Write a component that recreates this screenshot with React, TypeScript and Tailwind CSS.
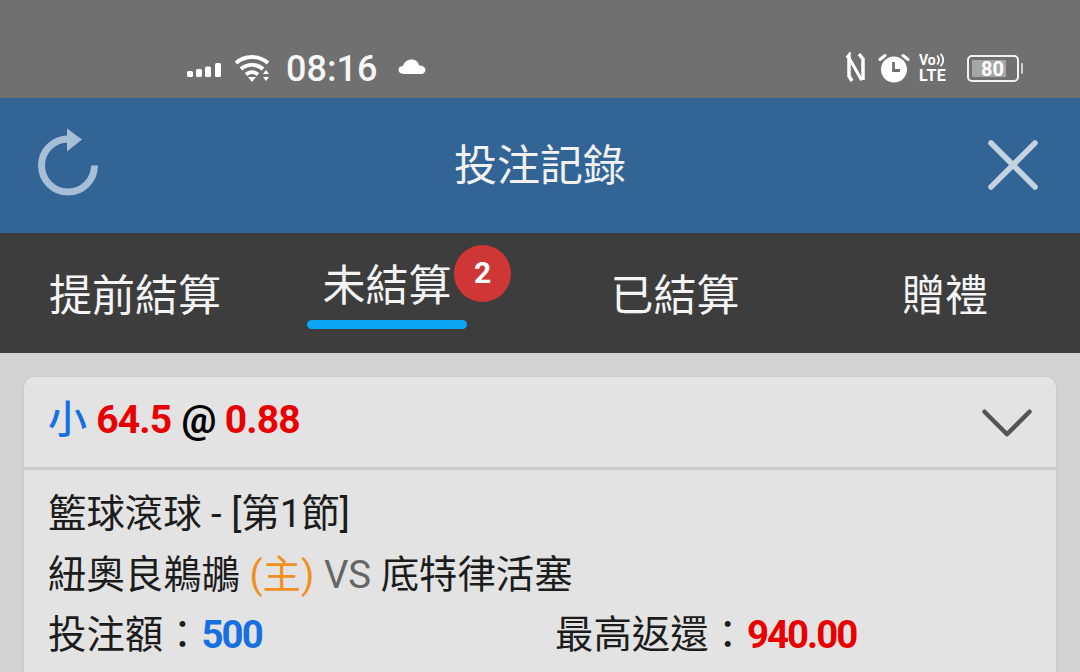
import { X, ChevronDown } from 'lucide-react';

const cjk = "font-['Roboto','Noto_Sans_CJK_TC',sans-serif]";

const App = () => {
  return (
    <div className={`w-[1080px] h-[672px] overflow-hidden bg-[#d2d2d2] flex flex-col ${cjk}`}>
      {/* status bar */}
      <div className="h-[98px] bg-[#707070] flex items-end justify-between pb-[9px] pl-[186px] pr-[61px] text-white">
        <div className="flex items-center h-[40px]">
          <svg width="38" height="16" viewBox="0 0 38 16" fill="white">
            <rect x="1" y="10" width="6" height="6" rx="1.5" />
            <rect x="10" y="8" width="6" height="8" rx="1.5" />
            <rect x="19" y="5.5" width="6" height="10.5" rx="1.5" />
            <rect x="29" y="2" width="6" height="14" rx="1.5" />
          </svg>
          <svg className="ml-[10px]" width="38" height="30" viewBox="0 0 38 30" fill="none" stroke="white" strokeWidth="3.800">
            <path d="M2 9C11 1 25 1 34 9" />
            <path d="M7 15C13 9.500 23 9.500 29 15" />
            <path d="M12 20.500C15.500 17.500 20.500 17.500 24 20.500" />
            <path d="M14 23L18 28L22 23Z" fill="white" stroke="none" />
            <path d="M29 20L32 16L35 20Z M29 23L32 27L35 23Z" fill="white" stroke="none" />
          </svg>
          <span className="ml-[14px] text-[36px] leading-[40px] font-medium text-[#f6f6f6]">08:16</span>
          <svg className="ml-[21px] mb-[6px]" width="28" height="18" viewBox="0 0 28 18" fill="white">
            <path d="M6 17C2.500 17 0.500 15 0.500 12.800C0.500 10.500 2.500 9 5 9C6 5 9.500 2.500 13.500 2.500C17.500 2.500 20.500 5 21 8.500C24.800 8.500 27.500 10.500 27.500 13C27.500 15.300 25.500 17 23 17Z" />
          </svg>
        </div>
        <div className="flex items-center h-[40px] mb-[1px]">
          <svg width="20" height="32" viewBox="0 0 20 32" fill="none" stroke="white" strokeWidth="3.500">
            <path d="M2 6L4 3.500V24L7 29" />
            <path d="M3 4L16 27L18 26" strokeWidth="3" />
            <path d="M18 28V7L14 2" />
          </svg>
          <svg className="ml-[13px]" width="32" height="30" viewBox="0 0 32 30">
            <circle cx="16" cy="16.500" r="13" fill="white" />
            <path d="M2 6.500L7 2.500M30 6.500L25 2.500" stroke="white" strokeWidth="3" strokeLinecap="round" />
            <path d="M15.500 9V17.500H22" fill="none" stroke="#707070" strokeWidth="2.800" />
          </svg>
          <div className="ml-[9px] flex flex-col items-start w-[29px] font-bold">
            <span className="flex items-center h-[16px] text-[14px] leading-[16px]">
              Vo
              <svg width="8" height="14" viewBox="0 0 7 12" fill="none" stroke="white" strokeWidth="1.500">
                <path d="M1 2C3 4.500 3 7.500 1 10M4 0.500C7 4 7 8 4 11.500" />
              </svg>
            </span>
            <span className="text-[16px] leading-[16px] tracking-[0.5px]">LTE</span>
          </div>
          <div className="ml-[19px] relative w-[52px] h-[27px] rounded-[5px] border-2 border-[#f2f2f2] flex items-center p-[3px]">
            <div className="w-[34px] h-full bg-[#a6a6a6] rounded-[1px]"></div>
            <span className="absolute left-[12px] top-[1px] text-[20px] leading-[22px] font-bold">80</span>
            <div className="absolute -right-[6px] top-[6px] w-[2px] h-[11px] bg-[#cfcfcf] rounded-full"></div>
          </div>
        </div>
      </div>

      {/* header */}
      <div className="h-[135px] bg-[#336496] flex items-center justify-between pl-[37px] pr-[41px] relative">
        <svg className="-mt-[12px]" width="62" height="72" viewBox="0 0 62 72" fill="none">
          <path d="M57.500 41.500A26.500 26.500 0 1 1 31 15" stroke="#a6bfd6" strokeWidth="7" />
          <path d="M30 4.500L45 15.500L30 27.500Z" fill="#a6bfd6" />
        </svg>
        <span className="absolute left-0 right-0 text-center text-[43px] leading-[60px] text-[#f2f2f2]">投注記錄</span>
        <X size={88} strokeWidth={1.5} className="text-[#c5d3e0] -mr-[18px] -mt-[2px]" />
      </div>

      {/* tabs */}
      <div className="h-[120px] bg-[#3d3d3d] grid grid-cols-[270px_270px_270px_270px] text-[#f4f4f4] text-[43px]">
        <div className="flex justify-center pt-[33px] leading-[60px]">提前結算</div>
        <div className="relative flex justify-center pr-[36px] pt-[23px] leading-[60px]">
          未結算
          <div className="absolute left-[37px] top-[87px] w-[160px] h-[9px] rounded-full bg-[#0aa5f5]"></div>
          <div className="absolute left-[184px] top-[12px] w-[57px] h-[57px] rounded-full bg-[#cf3636] text-white text-[30px] font-bold flex items-center justify-center pb-[1px]">2</div>
        </div>
        <div className="flex justify-center pt-[33px] leading-[60px]">已結算</div>
        <div className="flex justify-center pt-[33px] leading-[60px]">贈禮</div>
      </div>

      {/* bet card */}
      <div className="flex-1 px-[24px] pt-[24px]">
        <div className="h-full bg-[#e3e3e3] rounded-t-[10px] shadow-sm">
          <div className="h-[93px] border-b-[3px] border-[#cccccc] flex items-center justify-between pl-[24px] pr-[18px] text-[39px] font-bold tracking-[-0.8px]">
            <div className="flex gap-[10px] -mt-[3px]">
              <span className="text-[#1670e0] font-medium">小</span>
              <span className="text-[#e80000]">64.5</span>
              <span className="text-black">@</span>
              <span className="text-[#e80000] -ml-[1px]">0.88</span>
            </div>
            <ChevronDown size={90} strokeWidth={1.2} className="text-[#555555] -mr-[14px] mt-[2px]" />
          </div>
          <div className="pl-[24px] pt-[14px] text-[38.4px] leading-[60.500px] text-[#1c1c1c]">
            <div>籃球滾球 - [第1節]</div>
            <div>
              紐奧良鵜鶘 <span className="text-[#f0901e]">(主)</span> <span className="text-[#666666]">VS</span> 底特律活塞
            </div>
            <div className="flex">
              <div className="w-[507px]">
                投注額：<span className="text-[#1670e0] font-bold tracking-[-2px]">500</span>
              </div>
              <div>
                最高返還：<span className="text-[#e80000] font-bold tracking-[-2px]">940.00</span>
              </div>
            </div>
          </div>
        </div>
      </div>
    </div>
  );
};

export default App;
